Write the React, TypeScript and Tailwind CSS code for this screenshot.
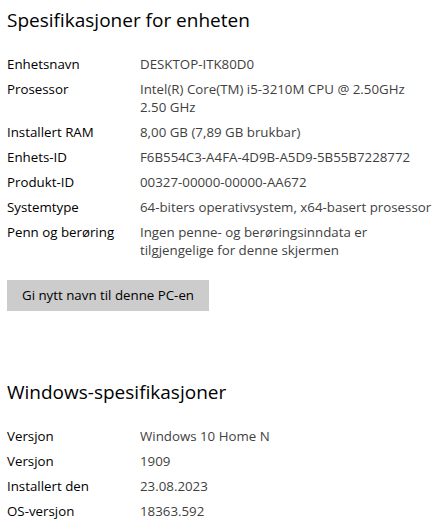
import React from 'react';

type Spec = { label: string; value: React.ReactNode };

const deviceSpecs: Spec[] = [
  { label: 'Enhetsnavn', value: 'DESKTOP-ITK80D0' },
  { label: 'Prosessor', value: 'Intel(R) Core(TM) i5-3210M CPU @ 2.50GHz 2.50 GHz' },
  { label: 'Installert RAM', value: '8,00 GB (7,89 GB brukbar)' },
  { label: 'Enhets-ID', value: 'F6B554C3-A4FA-4D9B-A5D9-5B55B7228772' },
  { label: 'Produkt-ID', value: '00327-00000-00000-AA672' },
  { label: 'Systemtype', value: '64-biters operativsystem, x64-basert prosessor' },
  { label: 'Penn og berøring', value: 'Ingen penne- og berøringsinndata er tilgjengelige for denne skjermen' },
];

const windowsSpecs: Spec[] = [
  { label: 'Versjon', value: 'Windows 10 Home N' },
  { label: 'Versjon', value: '1909' },
  { label: 'Installert den', value: '23.08.2023' },
  { label: 'OS-versjon', value: '18363.592' },
];

function SpecList({ items }: { items: Spec[] }) {
  return (
    <div className="flex flex-col gap-[7px]">
      {items.map((item, i) => (
        <div key={i} className="flex text-[13.3px] leading-[18px]">
          <div className="w-[133px] shrink-0 text-black">{item.label}</div>
          <div className="w-[292px] text-[#3f3f3f]">{item.value}</div>
        </div>
      ))}
    </div>
  );
}

export default function App() {
  return (
    <div
      className="min-h-screen bg-white pl-[7px] pt-[6px]"
      style={{ fontFamily: '"Open Sans", "Noto Sans", sans-serif' }}
    >
      <h1 className="text-[19px] leading-[28px] text-black">Spesifikasjoner for enheten</h1>

      <div className="mt-[21px]">
        <SpecList items={deviceSpecs} />
      </div>

      <button className="mt-[21px] h-[31px] w-[202px] bg-[#cccccc] text-[13.3px] text-black">
        Gi nytt navn til denne PC-en
      </button>

      <h2 className="mt-[67px] text-[19px] leading-[28px] text-black">Windows-spesifikasjoner</h2>

      <div className="mt-[21px]">
        <SpecList items={windowsSpecs} />
      </div>
    </div>
  );
}
